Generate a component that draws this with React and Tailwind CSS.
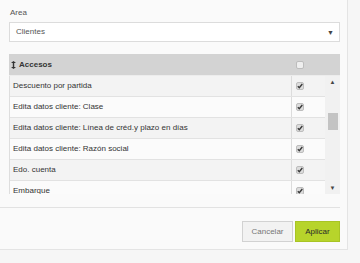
const items = [
  "Descuento por partida",
  "Edita datos cliente: Clase",
  "Edita datos cliente: Línea de créd.y plazo en días",
  "Edita datos cliente: Razón social",
  "Edo. cuenta",
  "Embarque",
];

function Check({ checked }) {
  return (
    <svg width="8" height="8" viewBox="0 0 8 8">
      <rect x="0.5" y="0.5" width="7" height="7" rx="1.5" fill={checked ? "#dcdcdc" : "#efefef"} stroke="#bdbdbd" />
      {checked && <path d="M1.8 4.2 L3.3 5.8 L6.3 2" stroke="#3a3a3a" strokeWidth="1.4" fill="none" />}
    </svg>
  );
}

export default function App() {
  return (
    <div className="w-[360px] h-[263px] bg-[#f6f6f6] overflow-hidden font-['Liberation_Sans',Arial,sans-serif]">
      {/* MODAL */}
      <div className="w-[348px] h-[250px] bg-[#fafafa] border-r border-b border-[#e4e4e4] flex flex-col">
        <div className="pl-[9px] pr-[7px] pt-[8px]">
          <p className="text-[8px] leading-[10px] text-[#555] pl-px">Area</p>

          <div className="mt-[4px] h-[20px] bg-white border border-[#dcdcdc] flex items-center justify-between pl-[6px] pr-[5px]">
            <span className="text-[8px] text-[#555]">Clientes</span>
            <span className="text-[7px] text-[#444] leading-none">▼</span>
          </div>

          {/* TABLE */}
          <div className="mt-[12px]">
            <div className="h-[22px] bg-[#d3d3d3] flex items-center border-b border-[#ececec]">
              <div className="flex-1 flex items-center gap-[3px] pl-[2px]">
                <svg width="5" height="8" viewBox="0 0 5 8">
                  <path d="M2.5 0 L5 2 L0 2 Z M2.5 8 L5 6 L0 6 Z" fill="#333" />
                  <rect x="1.8" y="1.5" width="1.4" height="5" fill="#333" />
                </svg>
                <span className="text-[8px] font-bold text-[#333]">Accesos</span>
              </div>
              <div className="w-[48px] flex pl-[4px]">
                <Check checked={false} />
              </div>
            </div>

            <div className="h-[118px] flex overflow-hidden border-l border-[#dedede]">
              <div className="flex-1">
                {items.map((name, i) => (
                  <div
                    key={name}
                    className={`h-[21px] flex border-b border-[#e2e2e2] ${i % 2 === 0 ? "bg-[#f3f3f3]" : "bg-[#fbfbfb]"}`}
                  >
                    <div className="flex-1 flex items-center pl-[3px] text-[8px] text-[#333] whitespace-nowrap">{name}</div>
                    <div className="w-[34px] border-l border-[#dcdcdc] flex items-center pl-[4px]">
                      <Check checked />
                    </div>
                  </div>
                ))}
              </div>
              {/* scrollbar */}
              <div className="w-[15px] bg-[#f1f1f1] flex flex-col items-center justify-between py-[3px]">
                <div className="flex flex-col items-center">
                  <span className="text-[6px] leading-none text-[#444]">▲</span>
                  <div className="w-[10px] h-[17px] bg-[#c3c3c3] mt-[28px]" />
                </div>
                <span className="text-[6px] leading-none text-[#444]">▼</span>
              </div>
            </div>
          </div>
        </div>

        {/* FOOTER */}
        <div className="mt-[13px] mr-[7px] border-t border-[#e2e2e2] flex justify-end gap-[2px] pt-[13px]">
          <button className="w-[51px] h-[21px] bg-[#f2f2f2] border border-[#d2d2d2] text-[8px] text-[#777]">
            Cancelar
          </button>
          <button className="w-[45px] h-[21px] bg-[#b7d42b] border border-[#a8c425] text-[8px] text-[#2a2a2a]">
            Aplicar
          </button>
        </div>
      </div>
    </div>
  );
}
